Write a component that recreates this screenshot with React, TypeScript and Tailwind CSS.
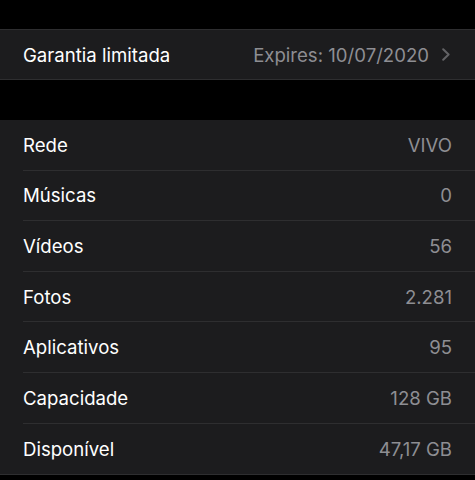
const rows = [
  { label: 'Rede', value: 'VIVO' },
  { label: 'Músicas', value: '0' },
  { label: 'Vídeos', value: '56' },
  { label: 'Fotos', value: '2.281' },
  { label: 'Aplicativos', value: '95' },
  { label: 'Capacidade', value: '128 GB' },
  { label: 'Disponível', value: '47,17 GB' },
];

export default function App() {
  return (
    <div className="w-[475px] h-[480px] bg-black pt-[29px] font-['Inter',sans-serif] text-[18.6px] overflow-hidden">
      <div className="bg-[#1c1c1e] border-y border-[#2e2e30]">
        <div className="h-[49px] flex items-center justify-between pl-[23px] pr-[25px] pt-[2px]">
          <span className="text-white">Garantia limitada</span>
          <span className="flex items-center gap-[13px] text-[#8e8e93]">
            Expires: 10/07/2020
            <svg width="8" height="13" viewBox="0 0 8 13" fill="none" className="mb-[1px]">
              <path d="M1.2 1.2 6.6 6.5 1.2 11.8" stroke="#636366" strokeWidth="2" strokeLinecap="round" strokeLinejoin="round" />
            </svg>
          </span>
        </div>
      </div>

      <div className="mt-[40px] bg-[#1c1c1e] border-b border-[#2e2e30]">
        {rows.map((row, i) => (
          <div key={row.label} className="pl-[23px]">
            <div
              className={`h-[50.6px] flex items-center justify-between pr-[23px] pt-[2px] ${
                i < rows.length - 1 ? 'border-b border-[#2e2e30]' : ''
              }`}
            >
              <span className="text-white">{row.label}</span>
              <span className="text-[#8e8e93]">{row.value}</span>
            </div>
          </div>
        ))}
      </div>
    </div>
  );
}
